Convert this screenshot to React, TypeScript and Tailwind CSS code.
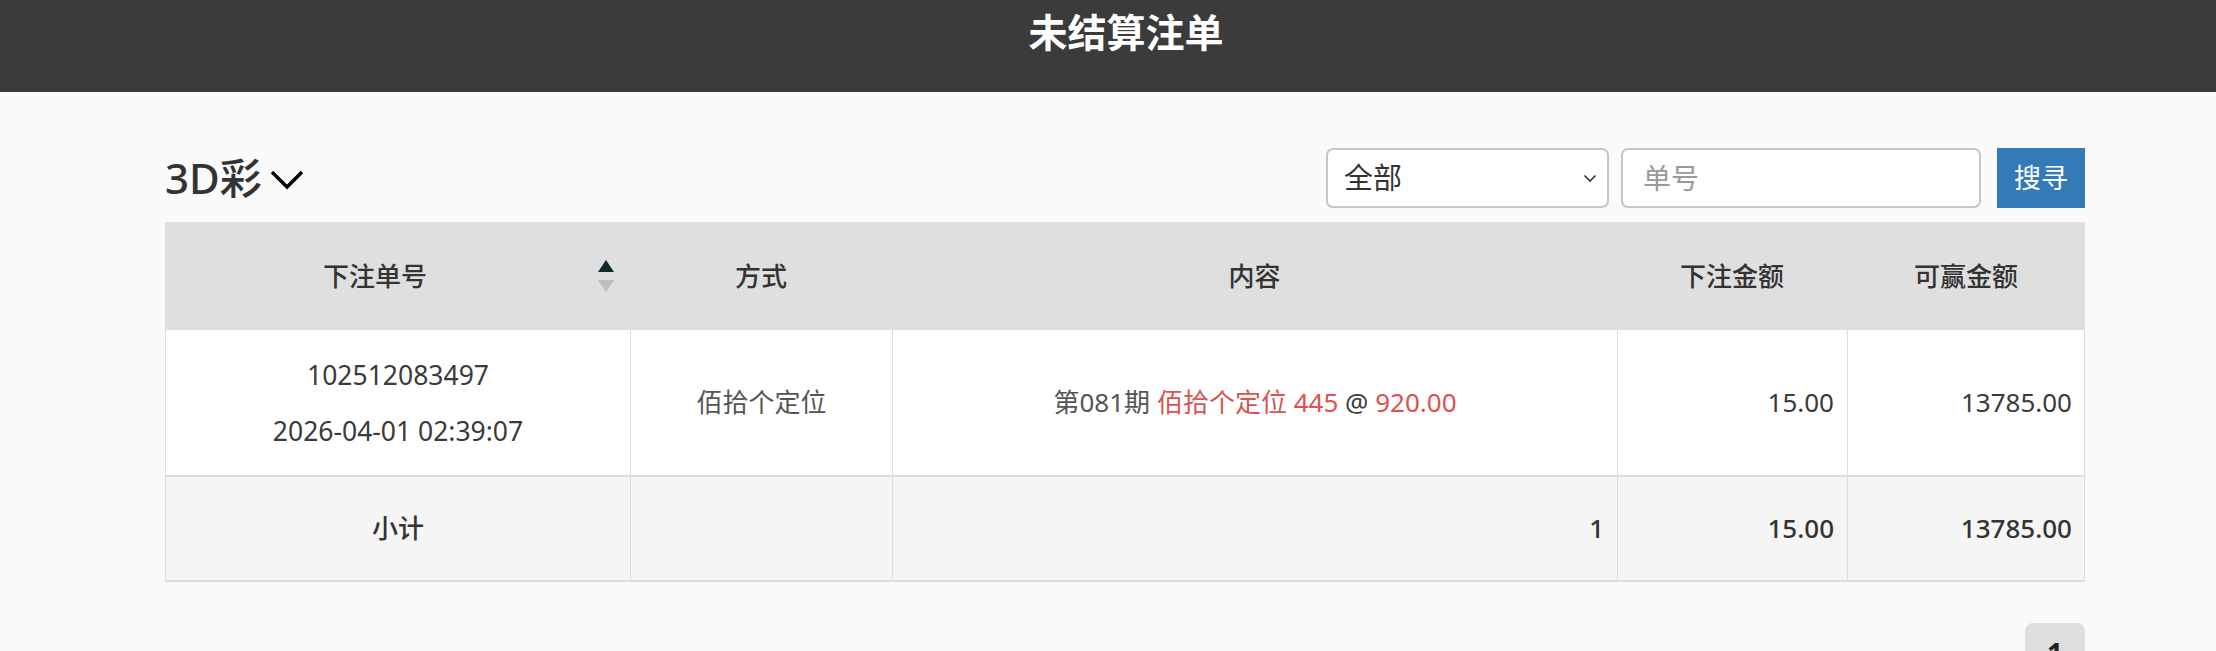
import React from "react";

const FONT = '"Noto Sans", "Noto Sans CJK SC", sans-serif';

export default function App() {
  return (
    <div className="w-[2216px] h-[651px] overflow-hidden bg-[#fafafa] text-[#333]" style={{ fontFamily: FONT }}>
      <div className="h-[92px] bg-[#3b3b3b]">
        <div className="h-[64px] flex items-center justify-center pl-[36px] text-white font-bold text-[39px]">未结算注单</div>
      </div>

      <div className="ml-[165px] w-[1920px]">
        <div className="mt-[56px] h-[60px] flex items-center justify-between">
          <div className="flex items-center gap-[8px]">
            <span className="text-[42px] leading-none font-medium text-[#333]">3D彩</span>
            <svg width="34" height="22" viewBox="0 0 34 22" className="mt-[4px]">
              <polyline points="2,3 17,18 32,3" fill="none" stroke="#000" strokeWidth="3.4" />
            </svg>
          </div>
          <div className="flex items-center h-[60px]">
            <div className="w-[283px] h-[60px] bg-white border-2 border-[#c6c6c6] rounded-[7px] flex items-center justify-between pl-[16px] pr-[10px]">
              <span className="text-[29px] text-[#333]">全部</span>
              <svg width="14" height="9" viewBox="0 0 14 9">
                <polyline points="1.5,1.5 7,7 12.5,1.5" fill="none" stroke="#333" strokeWidth="1.6" />
              </svg>
            </div>
            <div className="ml-[12px] w-[360px] h-[60px] bg-white border-2 border-[#c6c6c6] rounded-[7px] flex items-center pl-[20px]">
              <span className="text-[28px] text-[#999]">单号</span>
            </div>
            <button className="ml-[16px] w-[88px] h-[60px] bg-[#337ab7] text-white text-[27px] flex items-center justify-center">搜寻</button>
          </div>
        </div>

        <div className="mt-[14px] text-[26px]">
          <div className="grid grid-cols-[465px_262px_725px_230px_238px] h-[108px] bg-[#dfdfdf] font-medium text-[#333]">
            <div className="relative flex items-center justify-center pr-[45px]">
              下注单号
              <div className="absolute right-[16px] top-[38px] flex flex-col gap-[8px]">
                <svg width="16" height="12" viewBox="0 0 16 12"><polygon points="8,0 16,12 0,12" fill="#0f2a2a" /></svg>
                <svg width="16" height="12" viewBox="0 0 16 12"><polygon points="0,0 16,0 8,12" fill="#bdbdbd" /></svg>
              </div>
            </div>
            <div className="flex items-center justify-center">方式</div>
            <div className="flex items-center justify-center">内容</div>
            <div className="flex items-center justify-center">下注金额</div>
            <div className="flex items-center justify-center">可赢金额</div>
          </div>

          <div className="grid grid-cols-[465px_262px_725px_230px_238px] h-[147px] bg-white border-x border-b-2 border-[#dddddd] text-[#3a3a3a]">
            <div className="flex flex-col items-center justify-center border-r border-[#dddddd] text-[26.5px]">
              <div className="leading-[56px]">102512083497</div>
              <div className="leading-[56px]">2026-04-01 02:39:07</div>
            </div>
            <div className="flex items-center justify-center border-r border-[#dddddd] text-[#555]">佰拾个定位</div>
            <div className="flex items-center justify-center border-r border-[#dddddd] whitespace-pre">
              <span className="text-[#555]">第081期 </span>
              <span className="text-[#d9534f]">佰拾个定位 445</span>
              <span> @ </span>
              <span className="text-[#d9534f]">920.00</span>
            </div>
            <div className="flex items-center justify-end pr-[13px] border-r border-[#dddddd]">15.00</div>
            <div className="flex items-center justify-end pr-[14px]">13785.00</div>
          </div>

          <div className="grid grid-cols-[465px_262px_725px_230px_238px] h-[105px] bg-[#f5f5f5] border-x border-b-2 border-[#dddddd] font-medium">
            <div className="flex items-center justify-center border-r border-[#dddddd]">小计</div>
            <div className="border-r border-[#dddddd]"></div>
            <div className="flex items-center justify-end pr-[13px] border-r border-[#dddddd]">1</div>
            <div className="flex items-center justify-end pr-[13px] border-r border-[#dddddd]">15.00</div>
            <div className="flex items-center justify-end pr-[14px]">13785.00</div>
          </div>
        </div>

        <div className="mt-[41px] flex justify-end">
          <div className="w-[60px] h-[60px] rounded-[8px] bg-[#dedede] flex items-center justify-center text-[28px] font-bold text-[#222]">1</div>
        </div>
      </div>
    </div>
  );
}
